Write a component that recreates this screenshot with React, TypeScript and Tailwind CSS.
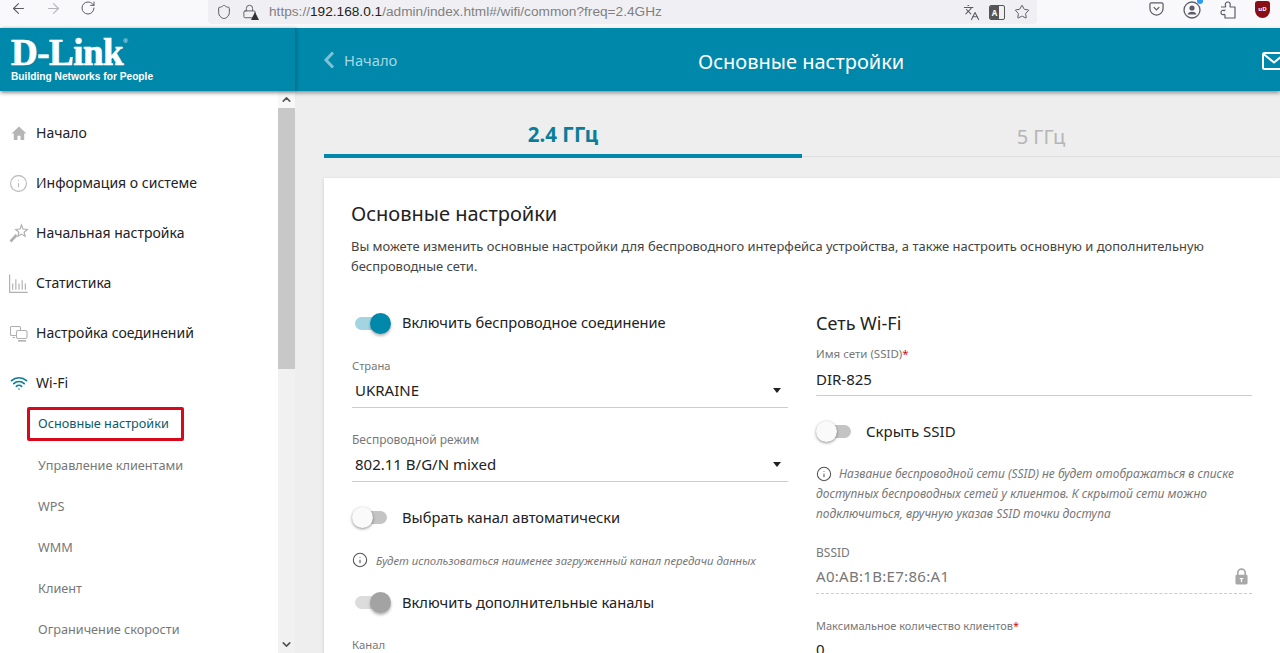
import { ArrowLeft, ArrowRight, RotateCw, Shield, Languages, Star, Info, Wifi, ChevronUp, ChevronDown, Lock } from 'lucide-react'

const font = 'font-["Noto_Sans","Open_Sans",sans-serif]'

function HomeIcon() {
  return (
    <svg viewBox="0 0 16 16" className="h-[16px] w-[16px]" fill="#b5b5b5">
      <path d="M8 1.500 0.500 8.500h2.300V15h3.700v-4.300h3V15h3.700V8.500h2.300z" />
    </svg>
  )
}

function WandIcon() {
  return (
    <svg viewBox="0 0 20 20" className="h-[20px] w-[20px]" fill="none" stroke="#b0b0b0" strokeWidth="1.200">
      <path d="M12.500 2 14 6l4.300.4-3.200 2.800 1 4.100-3.600-2.200-3.600 2.200 1-4.100-3.200-2.800L11 6z" />
      <path d="M7.500 12 1.500 18.500" strokeWidth="2.600" />
    </svg>
  )
}

function StatsIcon() {
  return (
    <svg viewBox="0 0 18 18" className="h-[19px] w-[19px]" stroke="#b0b0b0" strokeWidth="1.100" fill="none">
      <path d="M.6 .5v16.900h17" />
      <path d="M3.500 15V9M6.500 15V5M9.500 15V9M12.500 15V6M15.500 15V9" />
    </svg>
  )
}

function ConnIcon() {
  return (
    <svg viewBox="0 0 18 18" className="h-[18px] w-[18px]" stroke="#b0b0b0" strokeWidth="1.100" fill="none">
      <path d="M6 11.500H1.500a1 1 0 0 1-1-1v-7a1 1 0 0 1 1-1h8a1 1 0 0 1 1 1V6" />
      <path d="M2.500 13.500H5" />
      <rect x="6.500" y="6.500" width="10.500" height="8" rx="1.500" />
      <path d="M8 16.800h8" strokeWidth="1.600" />
    </svg>
  )
}

function PocketIcon() {
  return (
    <svg viewBox="0 0 16 16" className="h-[15px] w-[15px]" fill="none" stroke="#5b5b66" strokeWidth="1.300">
      <path d="M2.500 2h11A1.500 1.500 0 0 1 15 3.500V8A7 7 0 0 1 1 8V3.500A1.500 1.500 0 0 1 2.500 2z" />
      <path d="M5 6.500l3 3 3-3" />
    </svg>
  )
}

function AccountIcon() {
  return (
    <svg viewBox="0 0 18 18" className="h-[18px] w-[18px]" fill="none" stroke="#5b5b66" strokeWidth="1.300">
      <circle cx="9" cy="9" r="8" />
      <circle cx="9" cy="7" r="2.600" fill="#5b5b66" stroke="none" />
      <path d="M4.500 13.500c.8-2 2.500-2.700 4.500-2.700s3.700.7 4.500 2.700z" fill="#5b5b66" stroke="none" />
    </svg>
  )
}

function ExtensionIcon() {
  return (
    <svg viewBox="0 0 16 18" className="h-[18px] w-[16px]" fill="none" stroke="#5b5b66" strokeWidth="1.200">
      <path d="M1 6h3.500C5.500 6 6 5.400 5.500 4.500 4.800 3 5.800 1 7.800 1s3 2 2.300 3.500c-.5.9 0 1.500 1 1.500H15v11H5v-2.500c0-.9-.6-1.300-1.500-.9C2.300 14 1 13.300 1 11.500s1.300-2.500 2.500-2.100c.9.400 1.500 0 1.500-.9" strokeLinejoin="round" />
    </svg>
  )
}

function LockIcon() {
  return (
    <svg viewBox="0 0 14 18" className="h-[17px] w-[13px]" fill="#a8a8a8">
      <path d="M3 8V5a4 4 0 0 1 8 0v3" fill="none" stroke="#a8a8a8" strokeWidth="1.800" />
      <rect x="0.500" y="7" width="13" height="10.500" rx="1.500" />
      <path d="M5 10.500h4v1.300H7.700v3H6.300v-3H5z" fill="#fff" />
    </svg>
  )
}

function Toggle({ on, muted }: { on?: boolean; muted?: boolean }) {
  if (on) {
    return (
      <div className="relative h-[13px] w-[34px] shrink-0 rounded-full" style={{ background: muted ? '#dcdcdc' : '#a4d4e0' }}>
        <div
          className="absolute right-[-2px] top-[-4px] h-[21px] w-[21px] rounded-full shadow-[0_2px_3px_rgba(0,0,0,0.3)]"
          style={{ background: muted ? '#a3a3a3' : '#0088ab' }}
        />
      </div>
    )
  }
  return (
    <div className="relative h-[13px] w-[34px] shrink-0 rounded-full bg-[#c4c4c4]">
      <div className="absolute left-[-1px] top-[-4px] h-[21px] w-[21px] rounded-full bg-[#fafafa] shadow-[0_1px_3px_rgba(0,0,0,0.45)]" />
    </div>
  )
}

function Caret() {
  return <div className="h-0 w-0 border-x-[4.5px] border-t-[5px] border-x-transparent border-t-[#222]" />
}

function Select({ label, value, labelSize }: { label: string; value: string; labelSize: string }) {
  return (
    <div>
      <div className={`${labelSize} leading-4 text-[#777]`}>{label}</div>
      <div className="mt-[5px] flex h-[29px] items-center justify-between border-b border-[#ccc] pb-[5px] pl-[3px] pr-[7px] text-[15px] text-[#222]">
        <span>{value}</span>
        <Caret />
      </div>
    </div>
  )
}

const topItems = [
  { icon: <HomeIcon />, label: 'Начало' },
  { icon: <Info className="h-[19px] w-[19px] text-[#b8b8b8]" strokeWidth={1.4} />, label: 'Информация о системе' },
  { icon: <WandIcon />, label: 'Начальная настройка' },
  { icon: <StatsIcon />, label: 'Статистика' },
  { icon: <ConnIcon />, label: 'Настройка соединений' },
  { icon: <Wifi className="h-[18px] w-[18px] text-[#0a7d99]" strokeWidth={2.200} />, label: 'Wi-Fi' },
]

const subItems = ['Управление клиентами', 'WPS', 'WMM', 'Клиент', 'Ограничение скорости']

export default function App() {
  return (
    <div className={`flex h-[653px] w-[1280px] flex-col overflow-hidden bg-white ${font}`}>
      {/* browser toolbar */}
      <div className="flex h-[28px] shrink-0 bg-[#f9f9fb] text-[#5b5b66]">
        <div className="flex w-[208px] shrink-0 items-start gap-[18px] pl-[10px]">
          <ArrowLeft className="h-[17px] w-[17px]" strokeWidth={1.500} />
          <ArrowRight className="h-[17px] w-[17px] text-[#b4b4ba]" strokeWidth={1.500} />
          <RotateCw className="h-[16px] w-[16px]" strokeWidth={1.500} />
        </div>
        <div className="flex h-[24px] w-[829px] shrink-0 items-center rounded-b-[4px] bg-[#f0f0f4] pl-[8px] pr-[7px]">
          <Shield className="h-[16px] w-[16px]" strokeWidth={1.500} />
          <div className="relative ml-[10px] h-[16px] w-[16px]">
            <Lock className="h-[15px] w-[15px]" strokeWidth={1.500} />
            <div className="absolute bottom-0 right-[-1px] h-0 w-0 border-x-[4.500px] border-b-[8px] border-x-transparent border-b-[#333]" />
          </div>
          <div className="ml-[11px] font-['Liberation_Sans',sans-serif] text-[13.660px] text-[#808080]">
            https://<span className="text-[#222]">192.168.0.1</span>/admin/index.html#/wifi/common?freq=2.4GHz
          </div>
          <div className="ml-auto flex items-center gap-[9px]">
            <Languages className="h-[17px] w-[17px]" strokeWidth={1.500} />
            <div className="flex h-[15px] w-[16px] overflow-hidden rounded-[2px] border border-[#555] text-[8px] font-bold leading-[13px] text-white">
              <div className="w-[9px] bg-[#555] text-center">A</div>
            </div>
            <Star className="h-[16px] w-[16px]" strokeWidth={1.500} />
          </div>
        </div>
        <div className="flex flex-1 items-start pl-[112px] pt-[1px]">
          <PocketIcon />
          <div className="relative ml-[19px]">
            <AccountIcon />
            <div className="absolute right-[-2px] top-[-3px] h-[6px] w-[6px] rounded-full bg-[#2a9df4]" />
          </div>
          <div className="ml-[19px]">
            <ExtensionIcon />
          </div>
          <div className="ml-[19px] flex h-[17px] w-[15px] items-center justify-center rounded-b-[8px] rounded-t-[3px] bg-[#8a0f14] text-[6px] font-bold text-white">
            uD
          </div>
        </div>
      </div>

      {/* router header */}
      <div className="z-10 flex h-[63px] shrink-0 bg-[#0088ab] text-white shadow-[0_2px_4px_rgba(0,0,0,0.4)]">
        <div className="w-[295px] shrink-0 pl-[11px] pt-[7px] shadow-[2px_0_3px_rgba(0,0,0,0.2)]">
          <div className="flex items-start font-['Liberation_Serif',serif] text-[37px] font-bold leading-[36px] tracking-[-0.500px] [-webkit-text-stroke:0.7px_white]">
            D-Link<span className="mt-[3px] font-['Liberation_Sans',sans-serif] text-[6px] font-normal leading-[6px] [-webkit-text-stroke:0]">®</span>
          </div>
          <div className="mt-[-1px] font-['Liberation_Sans',sans-serif] text-[10.200px] font-bold leading-[13px]">
            Building Networks for People
          </div>
        </div>
        <div className="relative flex flex-1 items-center pl-[28px] pt-[1px]">
          <svg viewBox="0 0 12 18" className="h-[18px] w-[12px]" fill="none" stroke="#7cc3d6" strokeWidth="3">
            <path d="M10 1.500 3 9l7 7.500" />
          </svg>
          <span className="ml-[9px] text-[14.700px] text-[#a6d9e6]">Начало</span>
          <div className="absolute left-[403px] top-[20px] text-[20px] leading-[27px]">Основные настройки</div>
          <svg viewBox="0 0 24 18" className="absolute left-[967px] top-[24px] h-[18px] w-[24px]" fill="none" stroke="#fff" strokeWidth="2">
            <rect x="1" y="1" width="22" height="16" rx="1.500" />
            <path d="M1.500 2 12 10.500 22.500 2" />
          </svg>
        </div>
      </div>

      <div className="flex min-h-0 flex-1">
        {/* sidebar */}
        <div className="flex w-[295px] shrink-0 bg-white">
          <div className="w-[278px] shrink-0 pt-[17px]">
            {topItems.map(item => (
              <div key={item.label} className="flex h-[50px] items-center text-sm text-[#222]">
                <div className="flex w-[36px] justify-center pl-[1px]">{item.icon}</div>
                <span>{item.label}</span>
              </div>
            ))}
            <div className="ml-[27px] mt-[-1px] flex h-[34px] w-[157px] items-center rounded-[2px] border-[3px] border-[#d8091c] pl-[8px] text-[12.700px] text-[#0b5a6e]">
              Основные настройки
            </div>
            <div className="mt-[4px]">
              {subItems.map(s => (
                <div key={s} className="flex h-[41px] items-center pl-[38px] text-[12.700px] text-[#777]">
                  {s}
                </div>
              ))}
            </div>
          </div>
          <div className="flex w-[17px] shrink-0 flex-col bg-[#f1f1f1] text-[#555]">
            <div className="flex h-[17px] items-center justify-center bg-[#f8f8f8]">
              <ChevronUp className="h-[13px] w-[13px]" strokeWidth={3} />
            </div>
            <div className="h-[261px] bg-[#c8c8c8]" />
            <div className="mt-auto flex h-[17px] items-center justify-center">
              <ChevronDown className="h-[13px] w-[13px]" strokeWidth={3} />
            </div>
          </div>
        </div>

        {/* main */}
        <div className="min-w-0 flex-1 bg-[#eeeeee] pl-[29px] pt-[27px]">
          <div className="flex h-[40px]">
            <div className="flex w-[478px] items-start justify-center border-b-[4px] border-[#0088ab] pt-[2px] text-[20.500px] font-bold leading-[28px] text-[#0a7d99]">
              2.4 ГГц
            </div>
            <div className="flex w-[478px] items-start justify-center pt-[5px]">
              <div className="text-xl leading-[28px] text-[#b5b5b5]">5 ГГц</div>
            </div>
          </div>
          <div className="ml-[478px] mt-[-2px] h-px bg-[#ddd]" />

          <div className="mt-[21px] bg-white pl-[28px] pr-[28px] pt-[22px] shadow-[0_1px_3px_rgba(0,0,0,0.15)]">
            <h2 className="ml-[-1px] text-xl leading-[27px] text-[#222]">Основные настройки</h2>
            <p className="ml-[-1px] mt-[9px] text-[12.950px] leading-[20px] text-[#444]">
              Вы можете изменить основные настройки для беспроводного интерфейса устройства, а также настроить основную и дополнительную беспроводные сети.
            </p>

            <div className="mt-[35px] grid grid-cols-2 gap-x-[28px]">
              <div>
                <div className="flex h-[24px] items-center pl-[3px]">
                  <Toggle on />
                  <span className="ml-[13px] text-[14.600px] text-[#222]">Включить беспроводное соединение</span>
                </div>
                <div className="mt-[23px]">
                  <Select label="Страна" value="UKRAINE" labelSize="text-[11.200px]" />
                </div>
                <div className="mt-[24px]">
                  <Select label="Беспроводной режим" value="802.11 B/G/N mixed" labelSize="text-xs" />
                </div>
                <div className="mt-[23px] flex h-[24px] items-center pl-[1px]">
                  <Toggle />
                  <span className="ml-[15px] text-[14.700px] text-[#222]">Выбрать канал автоматически</span>
                </div>
                <div className="mt-[23px] flex h-[16px] items-center italic text-[#777]">
                  <Info className="h-[16px] w-[16px] text-[#555]" strokeWidth={1.600} />
                  <span className="ml-[8px] text-[11.350px]">Будет использоваться наименее загруженный канал передачи данных</span>
                </div>
                <div className="mt-[22px] flex h-[24px] items-center pl-[3px]">
                  <Toggle on muted />
                  <span className="ml-[13px] text-[14.700px] text-[#222]">Включить дополнительные каналы</span>
                </div>
                <div className="mt-[23px] text-[11.300px] leading-4 text-[#777]">Канал</div>
              </div>

              <div>
                <div className="flex h-[24px] items-center text-lg text-[#222]">Сеть Wi-Fi</div>
                <div className="mt-[11px] text-[11.500px] leading-4 text-[#777]">
                  Имя сети (SSID)<span className="text-[#d8091c]">*</span>
                </div>
                <div className="mt-[6px] h-[28px] border-b border-[#ccc] text-[15px] text-[#222]">DIR-825</div>
                <div className="mt-[23px] flex h-[24px] items-center pl-[1px]">
                  <Toggle />
                  <span className="ml-[15px] text-[15px] text-[#222]">Скрыть SSID</span>
                </div>
                <div className="mt-[21px] text-xs italic leading-[20px] text-[#777]">
                  <Info className="mb-[2px] mr-[7px] inline h-[16px] w-[16px] text-[#555]" strokeWidth={1.600} />
                  Название беспроводной сети (SSID) не будет отображаться в списке доступных беспроводных сетей у клиентов. К скрытой сети можно подключиться, вручную указав SSID точки доступа
                </div>
                <div className="mt-[21px] text-xs leading-4 text-[#777]">BSSID</div>
                <div className="mt-[4px] flex h-[29px] items-start justify-between border-b border-dashed border-[#ccc] pr-[4px] text-[15px] tracking-[0.300px] text-[#777]">
                  <span>A0:AB:1B:E7:86:A1</span>
                  <div className="mt-[3px]">
                    <LockIcon />
                  </div>
                </div>
                <div className="mt-[24px] text-[11px] leading-4 text-[#777]">
                  Максимальное количество клиентов<span className="text-[#d8091c]">*</span>
                </div>
                <div className="mt-[4px] text-[15px] text-[#222]">0</div>
              </div>
            </div>
          </div>
        </div>
      </div>
    </div>
  )
}
